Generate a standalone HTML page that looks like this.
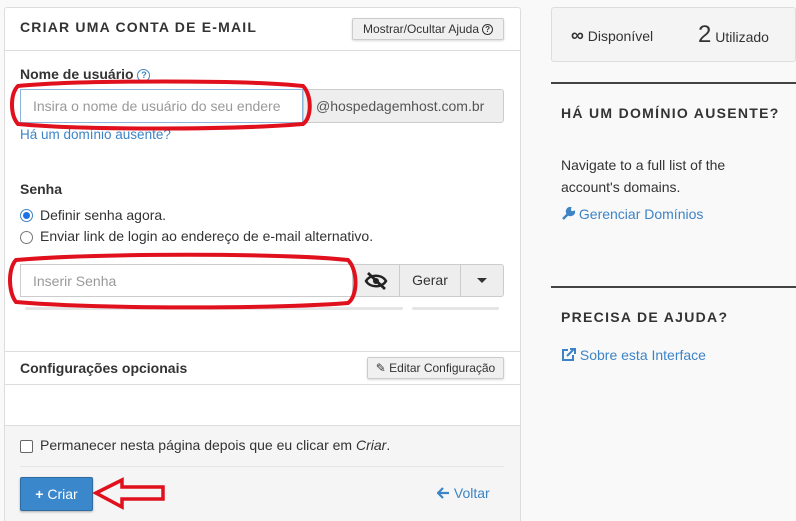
<!DOCTYPE html>
<html style="width:796px;height:521px;overflow:hidden"><head><meta charset="utf-8"><style>
*{box-sizing:border-box;margin:0;padding:0}
body{width:796px;height:521px;overflow:hidden;background:#f9f9f9;font-family:"Liberation Sans",sans-serif;color:#333;position:relative;font-size:14px}
.abs{position:absolute}
.panel{left:4px;top:7px;width:517px;height:514px;background:#fff;border:1px solid #ddd;border-bottom:none;border-radius:3px 3px 0 0}
.btn{position:absolute;background:#f0f0f0;border:1px solid #ccc;border-radius:2px;font-size:12px;color:#333;box-shadow:0 1px 2px rgba(0,0,0,.15);display:flex;align-items:center;justify-content:center}
.lbl{font-weight:bold;font-size:14px}
.link{color:#3d84c6}
.inp{border:1px solid #ccc;background:#fff;color:#999;font-size:14px;padding-left:12px;display:flex;align-items:center}
.hr{position:absolute;height:1px;background:#ddd}
</style></head><body>
<div class="abs panel"></div>
<div class="abs" style="left:20px;top:19px;font-size:14px;font-weight:bold;letter-spacing:1.2px;color:#333">CRIAR UMA CONTA DE E-MAIL</div>
<div class="btn" style="left:352px;top:18px;width:152px;height:22px">Mostrar/Ocultar Ajuda <span style="display:inline-block;width:11px;height:11px;border:1.5px solid #333;border-radius:50%;font-size:8px;line-height:9px;text-align:center;margin-left:3px;font-weight:bold">?</span></div>
<div class="hr" style="left:5px;top:50px;width:515px"></div>

<div class="abs lbl" style="left:20px;top:66px">Nome de usuário <span style="display:inline-block;width:13px;height:13px;border:1.5px solid #3d84c6;border-radius:50%;color:#3d84c6;font-size:9px;line-height:10px;text-align:center;vertical-align:1px">?</span></div>
<div class="abs inp" style="left:20px;top:89px;width:283px;height:34px;border-color:#8fb4dc;white-space:nowrap;overflow:hidden">Insira o nome de usuário do seu endere</div>
<div class="abs" style="left:303px;top:89px;width:201px;height:34px;background:#eee;border:1px solid #ccc;border-radius:0 3px 3px 0;font-size:14px;color:#555;padding-left:12px;line-height:32px">@hospedagemhost.com.br</div>
<div class="abs link" style="left:20px;top:127px;font-size:13.5px">Há um domínio ausente?</div>

<div class="abs lbl" style="left:20px;top:181px">Senha</div>
<div class="abs" style="left:20px;top:209px;width:13px;height:13px;border:1px solid #3d84c6;border-radius:50%;background:#fff"><div style="margin:2px;width:7px;height:7px;border-radius:50%;background:#1a73e8"></div></div>
<div class="abs" style="left:40px;top:207px">Definir senha agora.</div>
<div class="abs" style="left:20px;top:231px;width:13px;height:13px;border:1px solid #777;border-radius:50%;background:#fff"></div>
<div class="abs" style="left:40px;top:228px">Enviar link de login ao endereço de e-mail alternativo.</div>

<div class="abs inp" style="left:20px;top:264px;width:333px;height:33px">Inserir Senha</div>
<div class="abs" style="left:352px;top:264px;width:48px;height:33px;background:#eee;border:1px solid #ccc;display:flex;align-items:center;justify-content:center">
<svg width="24" height="18" viewBox="0 0 24 18"><path d="M2 9 C6 2 18 2 22 9 C18 16 6 16 2 9Z" fill="none" stroke="#222" stroke-width="2.5"/><circle cx="12" cy="9" r="3" fill="#222"/><path d="M4 1 L21 17" stroke="#222" stroke-width="2.8"/></svg></div>
<div class="abs" style="left:399px;top:264px;width:62px;height:33px;background:#eee;border:1px solid #ccc;font-size:14px;line-height:31px;text-align:center">Gerar</div>
<div class="abs" style="left:460px;top:264px;width:44px;height:33px;background:#eee;border:1px solid #ccc;border-radius:0 3px 3px 0;display:flex;align-items:center;justify-content:center"><div style="border-left:5px solid transparent;border-right:5px solid transparent;border-top:5px solid #333"></div></div>
<div class="abs" style="left:25px;top:307px;width:378px;height:3px;background:#e5e5e5;border-radius:2px"></div>
<div class="abs" style="left:412px;top:307px;width:87px;height:3px;background:#e5e5e5;border-radius:2px"></div>

<div class="hr" style="left:5px;top:351px;width:515px"></div>
<div class="abs lbl" style="left:20px;top:360px">Configurações opcionais</div>
<div class="btn" style="left:367px;top:357px;width:137px;height:22px">✎ Editar Configuração</div>
<div class="hr" style="left:5px;top:384px;width:515px"></div>
<div class="abs" style="left:5px;top:425px;width:515px;height:96px;background:#f5f5f5;border-top:1px solid #ddd"></div>
<div class="abs" style="left:20px;top:440px;width:13px;height:13px;border:1px solid #666;border-radius:2px;background:#fff"></div>
<div class="abs" style="left:40px;top:437px">Permanecer nesta página depois que eu clicar em <i>Criar</i>.</div>
<div class="hr" style="left:20px;top:466px;width:484px;background:#e5e5e5"></div>
<div class="abs" style="left:20px;top:477px;width:73px;height:34px;background:#3a87cc;border:1px solid #2e6da4;border-radius:2px;color:#fff;font-size:14px;line-height:32px;text-align:center;box-shadow:0 1px 2px rgba(0,0,0,.3)"><b>+</b> Criar</div>
<div class="abs link" style="left:437px;top:485px"><svg width="13" height="12" viewBox="0 0 13 12" style="vertical-align:-1px"><path d="M6 1 L1 6 L6 11 M1 6 H12" fill="none" stroke="#3d84c6" stroke-width="2.2"/></svg> Voltar</div>

<!-- right -->
<div class="abs" style="left:551px;top:7px;width:245px;height:55px;background:#f4f4f4;border:1px solid #ddd;border-radius:3px"></div>
<div class="abs" style="left:571px;top:25px;font-size:14px"><span style="font-size:18px;font-weight:bold">∞</span> Disponível</div>
<div class="abs" style="left:698px;top:21px;font-size:14px"><span style="font-size:24px">2</span> Utilizado</div>
<div class="abs" style="left:551px;top:82px;width:245px;height:2px;background:#444"></div>
<div class="abs" style="left:561px;top:105px;font-size:14px;font-weight:bold;letter-spacing:1.3px">HÁ UM DOMÍNIO AUSENTE?</div>
<div class="abs" style="left:561px;top:154px;line-height:22px">Navigate to a full list of the<br>account's domains.</div>
<div class="abs link" style="left:561px;top:206px"><svg width="14" height="14" viewBox="0 0 14 14" style="vertical-align:-2px"><path d="M2 12 L8 6 M9 1 A3.5 3.5 0 1 0 13 5 L10.5 5.5 L8.5 3.5 Z" stroke="#3d84c6" stroke-width="2.5" fill="#3d84c6"/></svg> Gerenciar Domínios</div>
<div class="abs" style="left:551px;top:286px;width:245px;height:2px;background:#444"></div>
<div class="abs" style="left:561px;top:309px;font-size:14px;font-weight:bold;letter-spacing:1.3px">PRECISA DE AJUDA?</div>
<div class="abs link" style="left:561px;top:347px"><svg width="15" height="14" viewBox="0 0 15 14" style="vertical-align:-2px"><path d="M7 2 H2 V12 H12 V7" fill="none" stroke="#3d84c6" stroke-width="2"/><path d="M6 8 L13 1 M9 1 H14 V6" fill="none" stroke="#3d84c6" stroke-width="2"/></svg> Sobre esta Interface</div>

<!-- red annotations -->
<svg class="abs" style="left:0;top:0" width="796" height="521">
<path d="M18 86 C80 80 250 80 303 86 C312 95 312 118 303 124 C230 130 80 130 18 124 C10 115 10 94 18 86Z" fill="none" stroke="#e0101c" stroke-width="4"/>
<path d="M16 260 C100 253 280 253 348 260 C358 270 358 296 348 303 C270 309 100 309 16 302 C8 292 8 268 16 260Z" fill="none" stroke="#e0101c" stroke-width="4"/>
<path d="M96 493 L122 480 L122 487 L163 487 L163 499 L122 499 L122 507 Z" fill="none" stroke="#e0101c" stroke-width="3.5"/>
</svg>
</body></html>
